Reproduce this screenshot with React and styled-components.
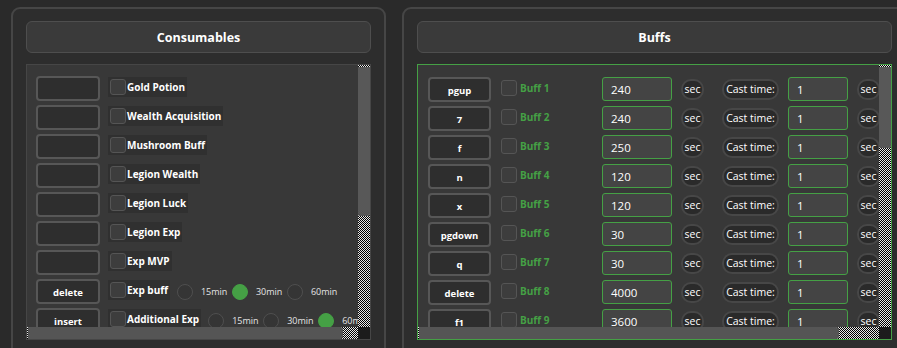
import React from 'react';
import styled, { createGlobalStyle } from 'styled-components';

const GREEN = '#45a045';

const consumables = [
  { key: '', label: 'Gold Potion' },
  { key: '', label: 'Wealth Acquisition' },
  { key: '', label: 'Mushroom Buff' },
  { key: '', label: 'Legion Wealth' },
  { key: '', label: 'Legion Luck' },
  { key: '', label: 'Legion Exp' },
  { key: '', label: 'Exp MVP' },
  { key: 'delete', label: 'Exp buff', radios: 1 },
  { key: 'insert', label: 'Additional Exp', radios: 2 },
];

const buffs = [
  { key: 'pgup', name: 'Buff 1', time: '240' },
  { key: '7', name: 'Buff 2', time: '240' },
  { key: 'f', name: 'Buff 3', time: '250' },
  { key: 'n', name: 'Buff 4', time: '120' },
  { key: 'x', name: 'Buff 5', time: '120' },
  { key: 'pgdown', name: 'Buff 6', time: '30' },
  { key: 'q', name: 'Buff 7', time: '30' },
  { key: 'delete', name: 'Buff 8', time: '4000' },
  { key: 'f1', name: 'Buff 9', time: '3600' },
];

const App = () => {
  return (
    <>
      <GlobalStyle />
      <Page>
        <Panel $width={375}>
          <PanelTitle>Consumables</PanelTitle>
          <ScrollFrame>
            <Viewport $pl={9} $pt={11}>
              <RowList>
                {consumables.map((item, i) => (
                  <Row key={i}>
                    <KeyBox $w={64}>{item.key}</KeyBox>
                    <CheckStrip>
                      <CheckBox />
                      <StripLabel>{item.label}</StripLabel>
                    </CheckStrip>
                    {item.radios && (
                      <Radios>
                        {['15min', '30min', '60min'].map((t, j) => (
                          <RadioOption key={t}>
                            <RadioDot $on={j === item.radios} />
                            <RadioText>{t}</RadioText>
                          </RadioOption>
                        ))}
                      </Radios>
                    )}
                  </Row>
                ))}
              </RowList>
            </Viewport>
            <VTrack>
              <VThumb $h={149} />
            </VTrack>
            <HTrack>
              <HThumb $w={315} />
            </HTrack>
            <Corner />
          </ScrollFrame>
        </Panel>

        <Panel $width={505}>
          <PanelTitle>Buffs</PanelTitle>
          <ScrollFrame $accent={GREEN}>
            <Viewport $pl={10} $pt={12}>
              <RowList>
                {buffs.map((b) => (
                  <Row key={b.name}>
                    <KeyBox $w={63}>{b.key}</KeyBox>
                    <BuffToggle>
                      <CheckBox />
                      <BuffName>{b.name}</BuffName>
                    </BuffToggle>
                    <NumInput $w={70}>{b.time}</NumInput>
                    <Pill $w={23} $ml={9}>sec</Pill>
                    <Pill $w={57} $ml={18}>Cast time:</Pill>
                    <NumInput $w={60} $ml={9}>1</NumInput>
                    <Pill $w={23} $ml={9}>sec</Pill>
                  </Row>
                ))}
              </RowList>
            </Viewport>
            <VTrack>
              <VThumb $h={81} />
            </VTrack>
            <HTrack>
              <HThumb $w={420} />
            </HTrack>
            <Corner />
          </ScrollFrame>
        </Panel>
      </Page>
    </>
  );
};

export default App;

const GlobalStyle = createGlobalStyle`
  html, body {
    margin: 0;
    padding: 0;
    background: #2a2a2a;
    overflow: hidden;
    font-family: "Open Sans", "Noto Sans", sans-serif;
    color: #fff;
  }
`;

const checker = `repeating-conic-gradient(#000 0 25%, #e8e8e8 0 50%) 0 0 / 2px 2px`;

const Page = styled.div`
  display: flex;
  gap: 16px;
  padding: 7px 0 0 11px;
  width: 1000px;
  height: 348px;
  box-sizing: border-box;
`;

const Panel = styled.div`
  flex: none;
  width: ${(p) => p.$width}px;
  height: 400px;
  box-sizing: border-box;
  border: 2px solid #464646;
  border-radius: 9px;
  background: #2d2d2d;
  padding: 12px 13px;
  display: flex;
  flex-direction: column;
`;

const PanelTitle = styled.div`
  height: 32px;
  box-sizing: border-box;
  border: 1px solid #4e4e4e;
  border-radius: 6px;
  background: #3a3a3a;
  display: flex;
  align-items: center;
  justify-content: center;
  font-weight: 700;
  font-size: 12.5px;
  margin-bottom: 11px;
`;

const ScrollFrame = styled.div`
  height: 276px;
  box-sizing: border-box;
  border: 1px solid ${(p) => p.$accent || '#464646'};
  background: #383838;
  display: grid;
  grid-template-columns: 1fr 12px;
  grid-template-rows: 1fr 12px;
  overflow: hidden;
`;

const Viewport = styled.div`
  overflow: hidden;
  padding: ${(p) => p.$pt}px 0 0 ${(p) => p.$pl}px;
  min-width: 0;
`;

const RowList = styled.div`
  display: flex;
  flex-direction: column;
  gap: 4px;
`;

const Row = styled.div`
  display: flex;
  align-items: center;
  height: 25px;
  white-space: nowrap;
`;

const KeyBox = styled.div`
  flex: none;
  width: ${(p) => p.$w}px;
  height: 25px;
  box-sizing: border-box;
  border: 2px solid #575757;
  border-radius: 4px;
  background: #2e2e2e;
  display: flex;
  align-items: center;
  justify-content: center;
  font-weight: 700;
  font-size: 9.5px;
  padding-top: 1px;
`;

const CheckStrip = styled.div`
  flex: none;
  display: flex;
  align-items: center;
  height: 20px;
  margin: -3px 0 0 8px;
  padding: 0 2px;
  background: #303030;
`;

const CheckBox = styled.div`
  flex: none;
  width: 16px;
  height: 16px;
  box-sizing: border-box;
  border: 1px solid #555;
  border-radius: 3px;
  background: #3d3d3d;
`;

const StripLabel = styled.span`
  font-weight: 700;
  font-size: 10px;
  margin-left: 1px;
`;

const Radios = styled.div`
  display: flex;
  align-items: center;
  margin-left: 7px;
`;

const RadioOption = styled.div`
  display: flex;
  align-items: center;
  gap: 8px;
  margin-right: 6px;
`;

const RadioDot = styled.div`
  width: 16px;
  height: 16px;
  box-sizing: border-box;
  border-radius: 50%;
  border: 1.5px solid ${(p) => (p.$on ? GREEN : '#4f4f4f')};
  background: ${(p) => (p.$on ? GREEN : '#353535')};
`;

const RadioText = styled.span`
  font-size: 9px;
  color: #e4e4e4;
  width: 25px;
`;

const BuffToggle = styled.div`
  flex: none;
  width: 91px;
  display: flex;
  align-items: center;
  gap: 3px;
  margin: -3px 0 0 10px;
`;

const BuffName = styled.span`
  font-weight: 700;
  font-size: 10px;
  color: ${GREEN};
`;

const NumInput = styled.div`
  flex: none;
  width: ${(p) => p.$w}px;
  height: 24px;
  box-sizing: border-box;
  margin-left: ${(p) => p.$ml || 10}px;
  border: 1px solid ${GREEN};
  border-radius: 3px;
  background: #444;
  display: flex;
  align-items: center;
  padding-left: 8px;
  font-size: 11.5px;
  margin-top: -1px;
`;

const Pill = styled.div`
  flex: none;
  width: ${(p) => p.$w}px;
  height: 21px;
  box-sizing: border-box;
  margin-left: ${(p) => p.$ml}px;
  border: 2px solid #474747;
  border-radius: 10px;
  background: #2a2a2a;
  display: flex;
  align-items: center;
  justify-content: center;
  font-size: 10.5px;
  margin-top: -1px;
`;

const VTrack = styled.div`
  background: ${checker};
  display: flex;
  flex-direction: column;
`;

const VThumb = styled.div`
  height: ${(p) => p.$h}px;
  margin-top: 2px;
  background: #585858;
  border-radius: 0 0 2px 2px;
`;

const HTrack = styled.div`
  background: ${checker};
  display: flex;
`;

const HThumb = styled.div`
  width: ${(p) => p.$w}px;
  margin-left: 1px;
  background: #555;
  border-radius: 0 3px 3px 0;
`;

const Corner = styled.div`
  background: #1c1c1c;
`;
